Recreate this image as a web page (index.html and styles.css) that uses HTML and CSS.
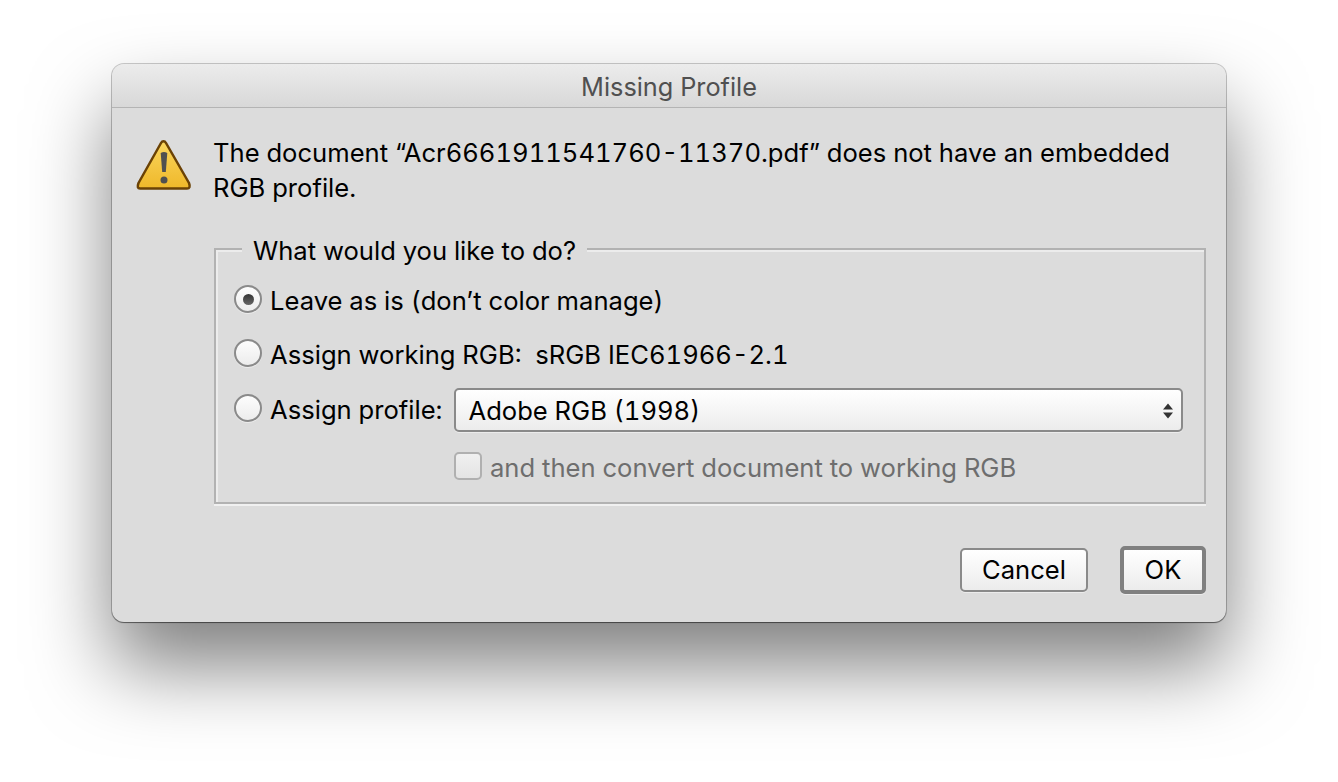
FILE: index.html
```html
<!DOCTYPE html>
<html lang="en">

<head>
    <meta charset="UTF-8">
    <meta name="viewport" content="width=device-width, initial-scale=1.0">
    <title>Missing Profile</title>
    <link rel="stylesheet" href="styles.css">
</head>

<body>
    <div class="dialog">
        <div class="title-bar">Missing Profile</div>
        <div class="dialog-body">
            <div class="message">
                <svg class="warning-icon" width="56" height="54" viewBox="0 0 56 54">
                    <defs>
                        <linearGradient id="warnFill" x1="0" y1="0" x2="0" y2="1">
                            <stop offset="0" stop-color="#fad65e"/>
                            <stop offset="1" stop-color="#efb82a"/>
                        </linearGradient>
                    </defs>
                    <path d="M27.500 3.200 Q29 3.200 30 5 L53 45 Q55 50.500 51 50.500 L4 50.500 Q0.500 50.500 2.500 45 L25 5 Q26 3.200 27.500 3.200 Z" fill="url(#warnFill)" stroke="#6b4205" stroke-width="2.500" stroke-linejoin="round"/>
                    <path d="M24.700 15 Q28 13 31.300 15 L29.800 34 L26.200 34 Z" fill="#505050"/>
                    <circle cx="28" cy="42" r="3.500" fill="#505050"/>
                </svg>
                <p>The document “Acr6661911541760-11370.pdf” does not have an embedded RGB profile.</p>
            </div>

            <fieldset class="options">
                <legend>What would you like to do?</legend>
                <div class="option">
                    <span class="radio checked"></span>
                    <span>Leave as is (don’t color manage)</span>
                </div>
                <div class="option option-second">
                    <span class="radio"></span>
                    <span>Assign working RGB:&nbsp; sRGB IEC61966-2.1</span>
                </div>
                <div class="option option-third">
                    <span class="radio"></span>
                    <span>Assign profile:</span>
                    <div class="select">
                        <span>Adobe RGB (1998)</span>
                        <svg width="10" height="16" viewBox="0 0 10 16">
                            <path d="M5 0.500 L10 6.500 L0 6.500 Z M5 15.500 L10 9.500 L0 9.500 Z" fill="#333"/>
                        </svg>
                    </div>
                </div>
                <div class="convert">
                    <span class="checkbox"></span>
                    <span>and then convert document to working RGB</span>
                </div>
            </fieldset>

            <div class="button-container">
                <button type="button" class="btn">Cancel</button>
                <button type="button" class="btn btn-default">OK</button>
            </div>
        </div>
    </div>
</body>

</html>
```

FILE: styles.css
```css
html,
body {
    height: 100%;
}

body {
    margin: 0;
    padding: 64px 0 0 112px;
    box-sizing: border-box;
    background-color: #fff;
    font-family: Inter, "Liberation Sans", sans-serif;
    font-size: 25.6px;
    font-variant-numeric: tabular-nums;
    line-height: 30px;
    color: #000;
    overflow: hidden;
}

.dialog {
    width: 1114px;
    height: 558px;
    background-color: #dcdcdc;
    border-radius: 12px;
    box-shadow: 0 0 0 1px rgba(0, 0, 0, 0.2), 0 1px 1px rgba(0, 0, 0, 0.4), 0 44px 80px rgba(0, 0, 0, 0.5);
    overflow: hidden;
}

.title-bar {
    height: 43px;
    line-height: 45px;
    text-align: center;
    font-size: 25.3px;
    color: #505050;
    background: linear-gradient(#ececec, #d8d8d8);
    border-bottom: 1px solid #b4b4b4;
}

.dialog-body {
    padding: 27px 20px 0 24px;
}

.message {
    display: flex;
    gap: 21px;
}

.warning-icon {
    flex: none;
    margin-top: 3px;
}

.message p {
    margin: 0;
    width: 970px;
    line-height: 35px;
}

.options {
    margin: 27px 0 0 78px;
    padding: 19px 0 0 18px;
    height: 272px;
    box-sizing: border-box;
    border: 2px solid #b2b2b2;
    box-shadow: 0 2px 0 #f0f0f0, inset 2px 2px 0 #ececec;
}

.options legend {
    margin-left: 8px;
    padding: 4px 11px 0;
    background-color: #dcdcdc;
}

.option {
    display: flex;
    align-items: center;
    gap: 8px;
}

.option-second {
    margin-top: 22px;
}

.option-third {
    margin-top: 17px;
}

.radio {
    flex: none;
    width: 24px;
    height: 24px;
    margin-bottom: 4px;
    border: 2px solid #8a8a8a;
    border-radius: 50%;
    background: linear-gradient(#fdfdfd, #ececec);
    box-shadow: 0 1px 0 #ececec;
    display: flex;
    align-items: center;
    justify-content: center;
}

.radio.checked::after {
    content: "";
    width: 11px;
    height: 11px;
    border-radius: 50%;
    background: linear-gradient(#333, #666);
}

.select {
    margin-left: 4px;
    width: 729px;
    height: 44px;
    box-sizing: border-box;
    padding: 2px 8px 0 12px;
    border: 2px solid #8a8a8a;
    border-radius: 5px;
    background: linear-gradient(#fff, #ececec);
    box-shadow: 0 1px 0 #ececec;
    display: flex;
    align-items: center;
    justify-content: space-between;
}

.convert {
    display: flex;
    align-items: center;
    gap: 8px;
    margin: 20px 0 0 220px;
    color: #6e6e6e;
}

.checkbox {
    flex: none;
    width: 28px;
    height: 28px;
    margin-bottom: 4px;
    box-sizing: border-box;
    border: 2px solid #b0b0b0;
    border-radius: 5px;
    background: linear-gradient(#f0f0f0, #e4e4e4);
}

.button-container {
    display: flex;
    justify-content: flex-end;
    align-items: center;
    gap: 32px;
    margin-top: 42px;
}

.btn {
    font: inherit;
    color: #000;
    width: 128px;
    height: 44px;
    padding: 0;
    border: 2px solid #8a8a8a;
    border-radius: 5px;
    background: linear-gradient(#fff, #ececec);
    box-shadow: 0 1px 0 #ececec;
}

.btn-default {
    width: 86px;
    height: 48px;
    border-width: 4px;
    border-color: #808080;
}
```
